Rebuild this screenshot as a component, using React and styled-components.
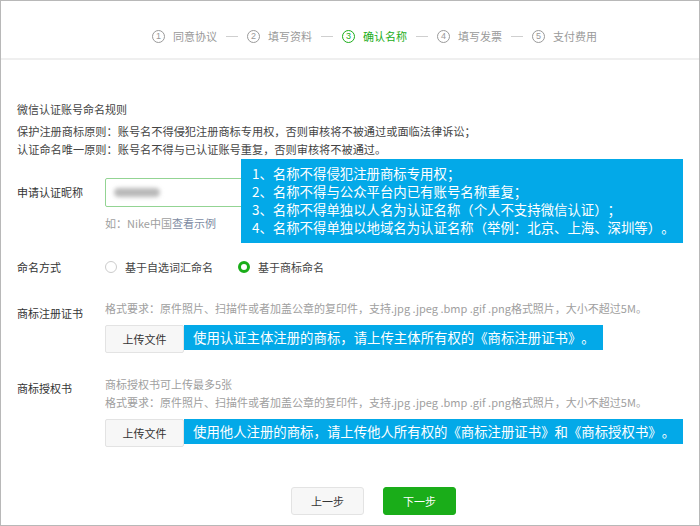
import React from "react";
import styled, { createGlobalStyle } from "styled-components";

const GlobalStyle = createGlobalStyle`
  html, body { margin: 0; padding: 0; background: #fff; }
  body { font-family: "Noto Sans CJK SC", "Noto Sans", sans-serif; }
  * { box-sizing: border-box; text-spacing-trim: space-all; }
`;

const Frame = styled.div`
  width: 700px;
  height: 526px;
  border: 1px solid #b8b8b8;
  background: #fff;
  overflow: hidden;
  font-family: "Noto Sans CJK SC", "Noto Sans", sans-serif;
`;

const Header = styled.div`
  height: 59px;
  padding: 13px 0 0 151px;
  display: flex;
  align-items: center;
  border-bottom: 2px solid #efefef;
`;

const Step = styled.div`
  display: flex;
  align-items: center;
  gap: 8px;
  font-size: 11px;
  line-height: 16px;
  color: ${(p) => (p.$active ? "#1aad19" : "#9a9a9a")};
`;

const StepNum = styled.span`
  width: 13px;
  height: 13px;
  border-radius: 50%;
  border: 1px solid currentColor;
  display: flex;
  align-items: center;
  justify-content: center;
  font-size: 9px;
  line-height: 1;
  font-family: "Liberation Sans", sans-serif;
`;

const Dash = styled.span`
  width: 12px;
  height: 1px;
  background: #cfcfcf;
  margin: 0 9px 0 9px;
`;

const Body = styled.div`
  padding: 40px 16px 0 16px;
`;

const RulesTitle = styled.div`
  font-size: 11px;
  line-height: 18px;
  color: #444;
  margin-bottom: 4px;
`;

const RuleLine = styled.div`
  font-size: 11.2px;
  line-height: 18px;
  color: #444;
`;

const Form = styled.div`
  margin-top: 20px;
  display: flex;
  flex-direction: column;
`;

const Row = styled.div`
  display: grid;
  grid-template-columns: 88px 1fr;
  margin-top: ${(p) => p.$gap || 0}px;
  position: relative;
`;

const Label = styled.div`
  font-size: 11px;
  color: #333;
  line-height: ${(p) => p.$lh || 18}px;
  padding-top: ${(p) => p.$pt || 0}px;
`;

const Field = styled.div`
  display: flex;
  flex-direction: column;
  align-items: flex-start;
`;

const Input = styled.div`
  width: 320px;
  height: 29px;
  border: 1px solid #93d493;
  border-radius: 2px;
  display: flex;
  align-items: center;
  padding-left: 8px;
`;

const Blurred = styled.span`
  width: 46px;
  height: 9px;
  border-radius: 5px;
  background: #b9b9b9;
  filter: blur(2px);
`;

const Hint = styled.div`
  margin-top: 8px;
  font-size: 11px;
  line-height: 16px;
  color: #a0a0a0;
`;

const HintLink = styled.span`
  color: #7d8ba3;
`;

const Callout = styled.div`
  position: absolute;
  left: 224px;
  top: -19px;
  width: 442px;
  padding: 5px 8px 7px 11px;
  background: #03a9e8;
  color: #fff;
  font-size: 13.4px;
  line-height: 18px;
  white-space: nowrap;
`;

const Radios = styled.div`
  display: flex;
  align-items: center;
  height: 20px;
`;

const RadioItem = styled.label`
  display: flex;
  align-items: center;
  gap: 8px;
  font-size: 11px;
  color: #444;
  margin-right: 25px;
`;

const RadioDot = styled.span`
  width: 12px;
  height: 12px;
  border-radius: 50%;
  border: ${(p) => (p.$on ? "3.5px solid #1aad19" : "1px solid #cccccc")};
  background: #fff;
`;

const SmallText = styled.div`
  font-size: 11px;
  line-height: 18px;
  color: #a0a0a0;
`;

const UploadLine = styled.div`
  margin-top: 8px;
  display: flex;
  align-items: flex-start;
`;

const UploadButton = styled.div`
  width: 79px;
  height: 28px;
  border: 1px solid #e3e3e3;
  border-radius: 2px;
  background: #f7f7f7;
  font-size: 11px;
  color: #333;
  display: flex;
  align-items: center;
  justify-content: center;
`;

const Note = styled.div`
  height: 25px;
  line-height: 25px;
  padding: 0 8px 0 9px;
  background: #03a9e8;
  color: #fff;
  font-size: 13.4px;
  white-space: nowrap;
`;

const Footer = styled.div`
  margin-top: 40px;
  padding-left: 47px;
  display: flex;
  justify-content: center;
  gap: 19px;
`;

const Button = styled.div`
  width: 73px;
  height: 28px;
  border-radius: 3px;
  font-size: 11px;
  display: flex;
  align-items: center;
  justify-content: center;
  background: ${(p) => (p.$primary ? "#1aad19" : "#f7f7f7")};
  color: ${(p) => (p.$primary ? "#fff" : "#353535")};
  border: 1px solid ${(p) => (p.$primary ? "#1aad19" : "#e3e3e3")};
`;

const steps = ["同意协议", "填写资料", "确认名称", "填写发票", "支付费用"];

export default function App() {
  return (
    <>
      <GlobalStyle />
      <Frame>
        <Header>
          {steps.map((s, i) => (
            <React.Fragment key={s}>
              {i > 0 && <Dash />}
              <Step $active={i === 2}>
                <StepNum>{i + 1}</StepNum>
                {s}
              </Step>
            </React.Fragment>
          ))}
        </Header>
        <Body>
          <RulesTitle>微信认证账号命名规则</RulesTitle>
          <RuleLine>保护注册商标原则：账号名不得侵犯注册商标专用权，否则审核将不被通过或面临法律诉讼；</RuleLine>
          <RuleLine>认证命名唯一原则：账号名不得与已认证账号重复，否则审核将不被通过。</RuleLine>
          <Form>
            <Row>
              <Label $lh={29}>申请认证昵称</Label>
              <Field>
                <Input>
                  <Blurred />
                </Input>
                <Hint>
                  如：Nike中国<HintLink>查看示例</HintLink>
                </Hint>
              </Field>
              <Callout>
                <div>1、名称不得侵犯注册商标专用权；</div>
                <div>2、名称不得与公众平台内已有账号名称重复；</div>
                <div>3、名称不得单独以人名为认证名称（个人不支持微信认证）；</div>
                <div>4、名称不得单独以地域名为认证名称（举例：北京、上海、深圳等）。</div>
              </Callout>
            </Row>
            <Row $gap={26}>
              <Label $lh={20}>命名方式</Label>
              <Radios>
                <RadioItem>
                  <RadioDot />
                  基于自选词汇命名
                </RadioItem>
                <RadioItem>
                  <RadioDot $on />
                  基于商标命名
                </RadioItem>
              </Radios>
            </Row>
            <Row $gap={22}>
              <Label $pt={5}>商标注册证书</Label>
              <Field>
                <SmallText>格式要求：原件照片、扫描件或者加盖公章的复印件，支持.jpg .jpeg .bmp .gif .png格式照片，大小不超过5M。</SmallText>
                <UploadLine>
                  <UploadButton>上传文件</UploadButton>
                  <Note>使用认证主体注册的商标，请上传主体所有权的《商标注册证书》。</Note>
                </UploadLine>
              </Field>
            </Row>
            <Row $gap={22}>
              <Label $pt={4}>商标授权书</Label>
              <Field>
                <SmallText>商标授权书可上传最多5张</SmallText>
                <SmallText>格式要求：原件照片、扫描件或者加盖公章的复印件，支持.jpg .jpeg .bmp .gif .png格式照片，大小不超过5M。</SmallText>
                <UploadLine>
                  <UploadButton>上传文件</UploadButton>
                  <Note>使用他人注册的商标，请上传他人所有权的《商标注册证书》和《商标授权书》。</Note>
                </UploadLine>
              </Field>
            </Row>
          </Form>
          <Footer>
            <Button>上一步</Button>
            <Button $primary>下一步</Button>
          </Footer>
        </Body>
      </Frame>
    </>
  );
}
